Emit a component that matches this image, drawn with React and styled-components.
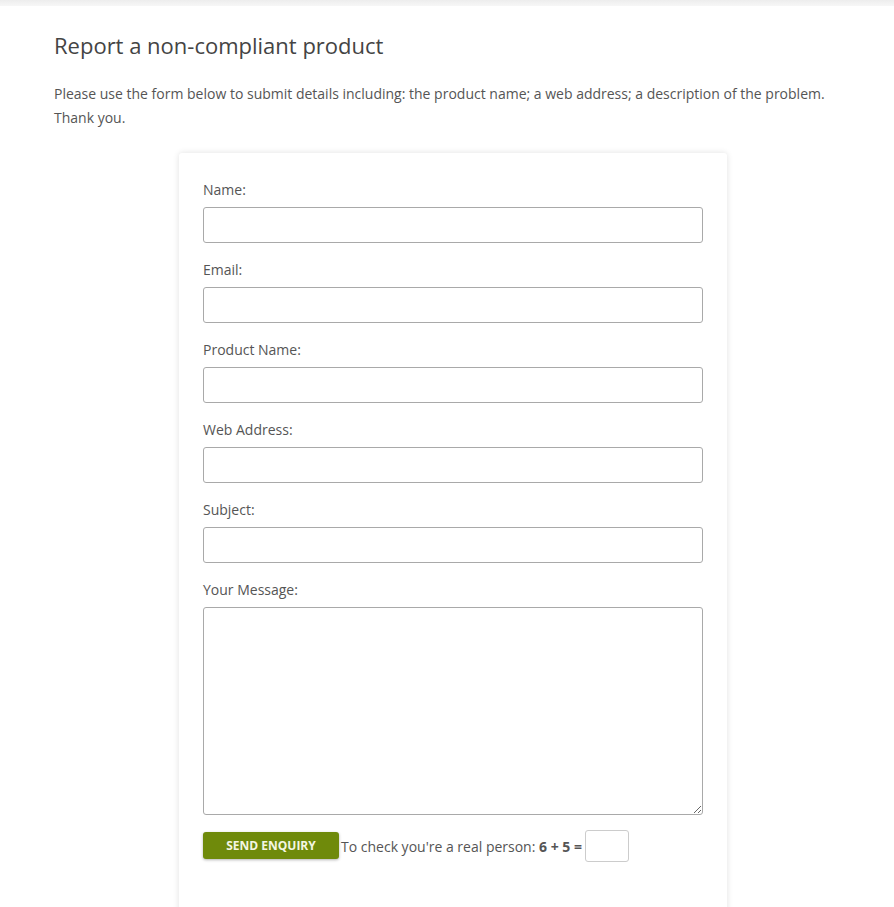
import styled, { createGlobalStyle } from 'styled-components'

const GlobalStyle = createGlobalStyle`
    body {
        margin: 0;
        background: #fff;
        font-family: "Open Sans", "Noto Sans", sans-serif;
        color: #555;
    }
`

const fields = ['Name:', 'Email:', 'Product Name:', 'Web Address:', 'Subject:']

const App = () => {
    return (
        <>
            <GlobalStyle />
            <TopBar />
            <Page>
                <Title>Report a non-compliant product</Title>
                <Intro>
                    Please use the form below to submit details including: the product name; a web address; a description of the problem.
                    <br />
                    Thank you.
                </Intro>

                <Card>
                    {fields.map((label) => (
                        <Field key={label}>
                            <Label>{label}</Label>
                            <Input type='text' />
                        </Field>
                    ))}
                    <Field>
                        <Label>Your Message:</Label>
                        <Message />
                    </Field>

                    {/* submit + sum check */}
                    <SubmitRow>
                        <SendButton>SEND ENQUIRY</SendButton>
                        <Check>
                            To check you're a real person: <b>6 + 5 =</b>
                        </Check>
                        <Answer type='text' />
                    </SubmitRow>
                </Card>
            </Page>
        </>
    )
}

const TopBar = styled.div`
    height: 6px;
    background: linear-gradient(#ededed, #f7f7f7);
`

const Page = styled.main`
    padding: 0 42px 0 54px;
`

const Title = styled.h1`
    margin: 21px 0 0;
    font-size: 22px;
    font-weight: 400;
    line-height: 36px;
    color: #444;
`

const Intro = styled.p`
    margin: 19px 0 0;
    font-size: 14px;
    line-height: 24px;
    color: #555;
`

const Card = styled.form`
    width: 500px;
    margin: 23px auto 0;
    padding: 27px 24px 60px;
    background: #fff;
    border-radius: 3px;
    box-shadow: 0 0 6px rgba(0, 0, 0, 0.12);
`

const Field = styled.div`
    margin-bottom: 17px;
`

const Label = styled.label`
    display: block;
    font-size: 14px;
    line-height: 20px;
    margin-bottom: 7px;
    color: #555;
`

const Input = styled.input`
    display: block;
    box-sizing: border-box;
    width: 100%;
    height: 36px;
    margin: 0;
    border: 1px solid #a9a9a9;
    border-radius: 3px;
    background: #fff;
    font-family: inherit;
    font-size: 14px;
`

const Message = styled.textarea`
    display: block;
    box-sizing: border-box;
    width: 100%;
    height: 208px;
    margin: 0;
    border: 1px solid #a9a9a9;
    border-radius: 3px;
    font-family: inherit;
`

const SubmitRow = styled.div`
    display: flex;
    align-items: center;
    margin-top: -2px;
`

const SendButton = styled.button`
    width: 136px;
    height: 27px;
    margin-top: -1px;
    border: none;
    border-radius: 3px;
    background: #6f8a0b;
    color: #f4f6e2;
    font-family: inherit;
    font-size: 12px;
    font-weight: 700;
    box-shadow: 0 1px 3px rgba(0, 0, 0, 0.3);
    cursor: pointer;
`

const Check = styled.span`
    margin-left: 2px;
    font-size: 14px;
    color: #555;

    b {
        font-weight: 700;
    }
`

const Answer = styled.input`
    box-sizing: border-box;
    width: 44px;
    height: 32px;
    margin-left: 3px;
    border: 1px solid #ccc;
    border-radius: 3px;
`

export default App
